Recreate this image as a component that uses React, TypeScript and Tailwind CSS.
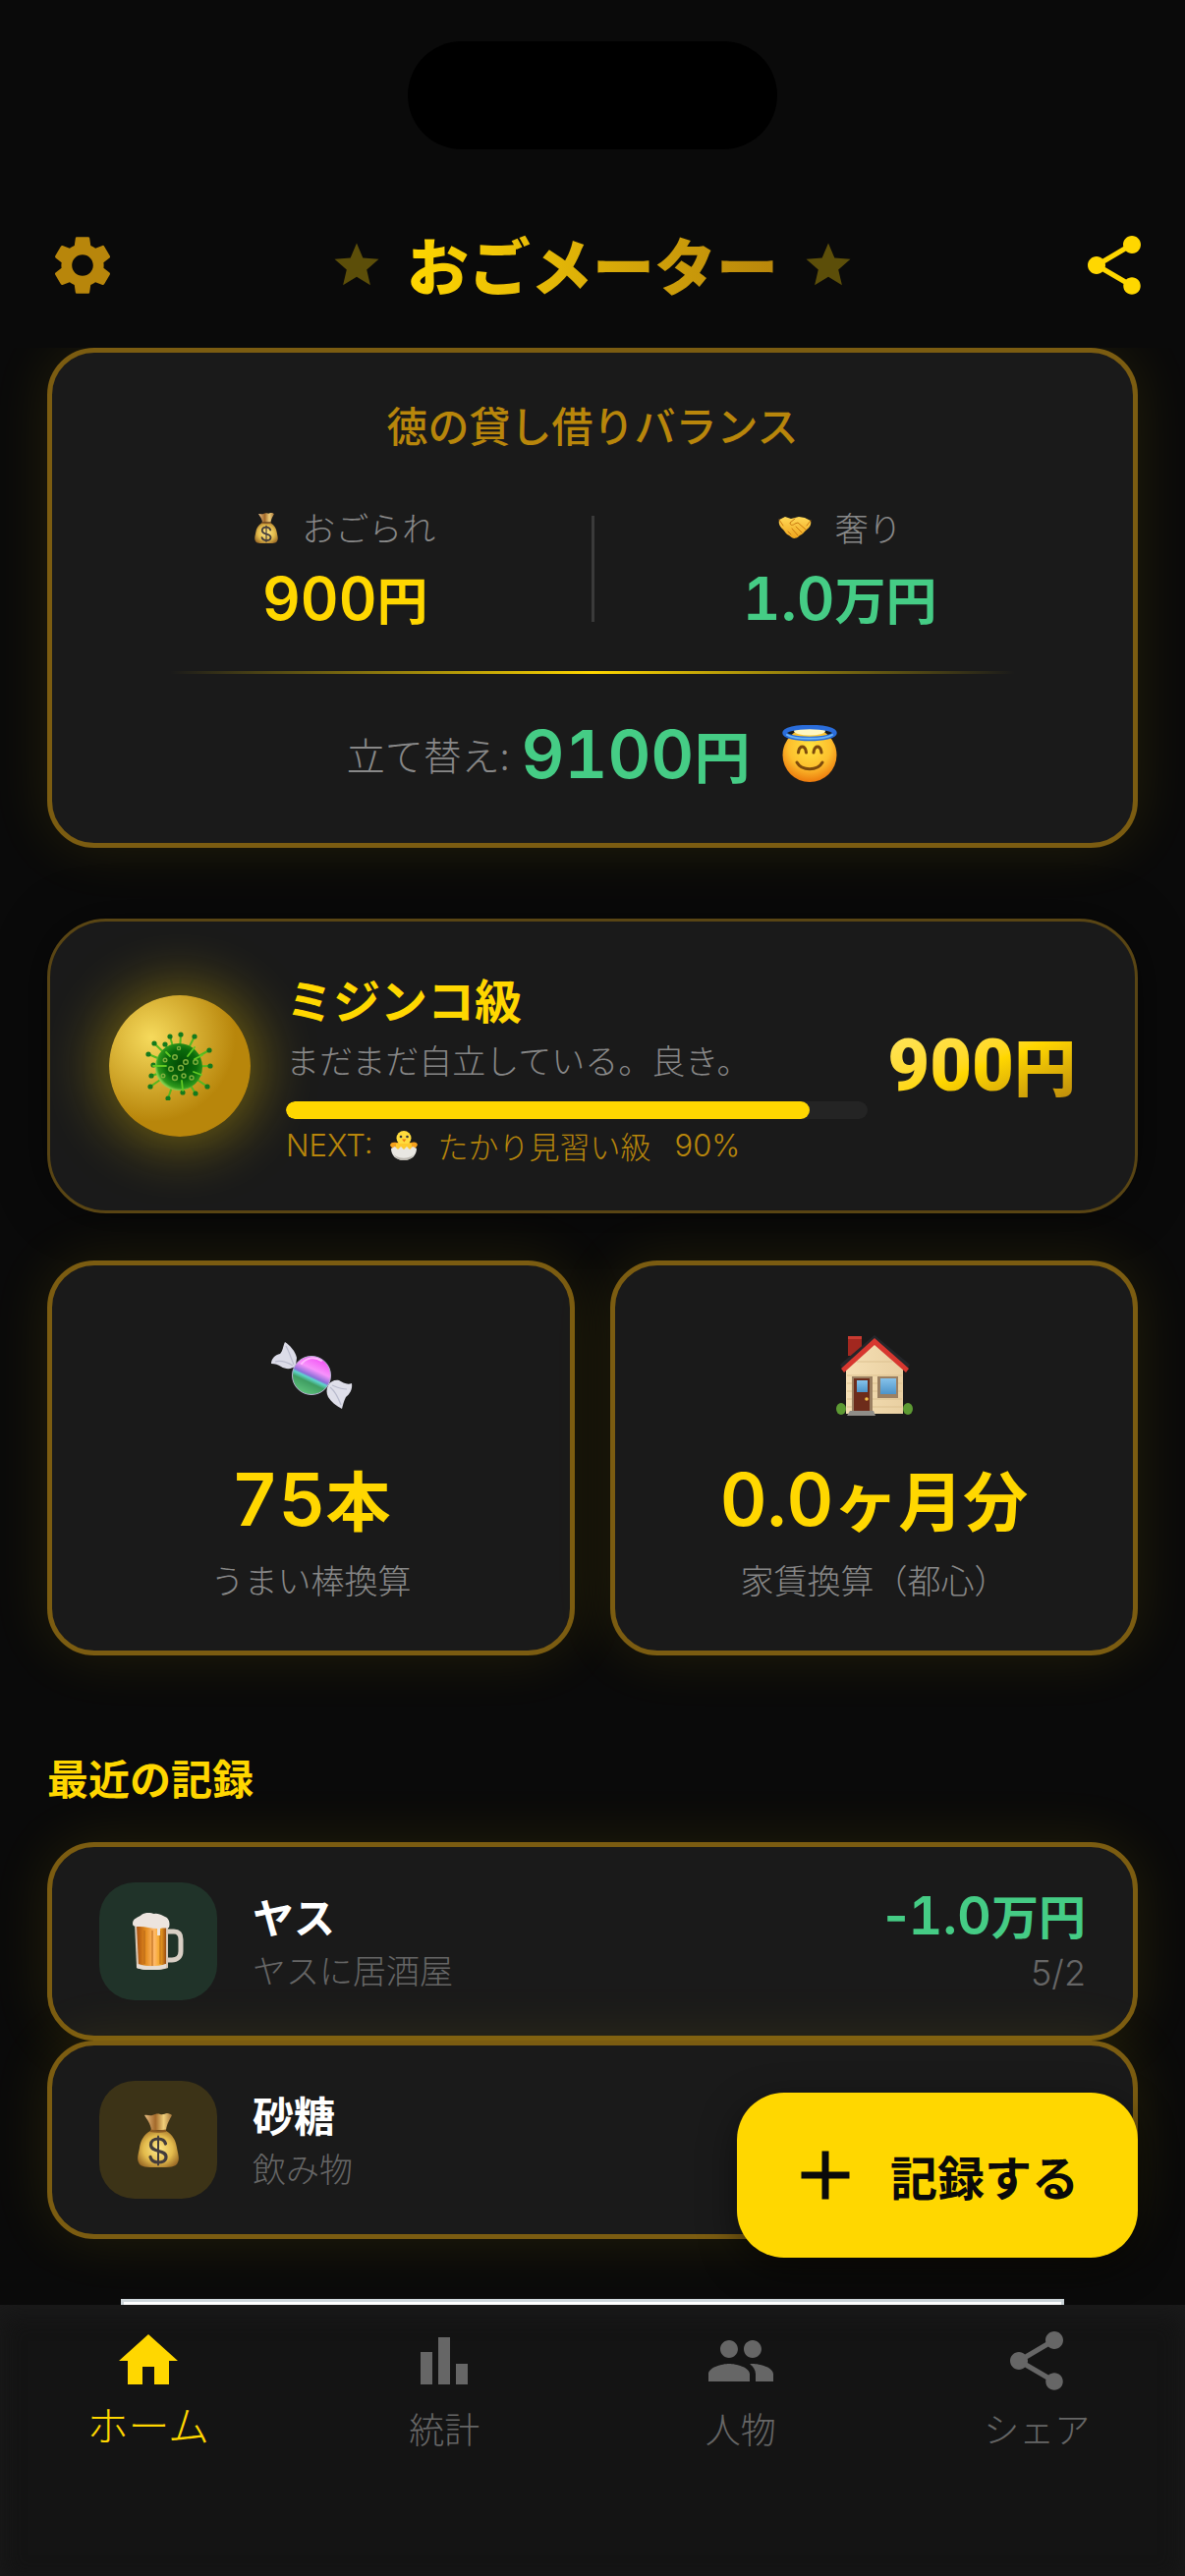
import type { ReactNode } from "react";
import {
  MdAdd,
  MdBarChart,
  MdHome,
  MdPeople,
  MdSettings,
  MdShare,
  MdStar,
} from "react-icons/md";

interface RecordItem {
  name: string;
  memo: string;
  icon: ReactNode;
  tile: string;
  color: string;
  sign?: string;
  value?: string;
  unit?: string;
  date?: string;
}

const cardClass =
  "border-5 border-[#7b5c11] rounded-[48px] bg-[#1a1a1a] shadow-[0_0_60px_rgba(255,215,0,0.1)]";

function MoneyBag({ className }: { className: string }) {
  return (
    <svg viewBox="0 0 42 55" className={className} aria-hidden="true">
      <defs>
        <radialGradient id="bagBody" cx="0.5" cy="0.5" r="0.6">
          <stop offset="0" stopColor="#ffe98a" />
          <stop offset="0.6" stopColor="#e3bb4c" />
          <stop offset="1" stopColor="#9a6a26" />
        </radialGradient>
        <linearGradient id="bagNeck" x1="0" x2="1">
          <stop offset="0" stopColor="#e6bd83" />
          <stop offset="0.4" stopColor="#a3692a" />
          <stop offset="0.7" stopColor="#f0cf7a" />
          <stop offset="1" stopColor="#a3743a" />
        </linearGradient>
      </defs>
      <path
        d="M7 2c3-1 5 1 8 0s5-2 8-1 5-1 7-1 4 1 5 2c-2 4-5 8-6 15H14C13 10 10 7 7 2z"
        fill="url(#bagNeck)"
      />
      <path
        d="M13 18h16c7 4 10 10 11 17 1 6 3 11 1 15-2 5-8 5-20 5S3 55 1 50c-2-4 0-9 1-15 1-7 4-13 11-17z"
        fill="url(#bagBody)"
      />
      <path d="M13 16.500c5 1 11 1 16 0v2.500c-5 1-11 1-16 0z" fill="#8a5a22" />
      <g fill="none" stroke="#433c3c" strokeWidth="3.200" strokeLinecap="round">
        <path d="M28.500 31c-1-4-4-5-7.500-5-4 0-7.500 2-7.500 6 0 8.500 15.500 4.500 15.500 12.500 0 4-4 5.500-8 5.500s-7-2-8-5.500" />
        <path d="M21 23.500v29" strokeWidth="2" />
      </g>
    </svg>
  );
}

function Handshake({ className }: { className: string }) {
  return (
    <svg viewBox="0 0 34 24" className={className} aria-hidden="true">
      <defs>
        <linearGradient id="hands" x1="0" y1="0" x2="0" y2="1">
          <stop offset="0" stopColor="#ffd957" />
          <stop offset="1" stopColor="#f0a51c" />
        </linearGradient>
      </defs>
      <path
        d="M1 4 7 1l6 2 4-1 4-1 6 1 6 3c1 4-1 7-4 9l-3 3c-2 3-4 2-5 4-2 2-3 1-4 2-3 0-4-2-6-3-3-1-4-4-6-6-3-3-5-5-4-10z"
        fill="url(#hands)"
      />
      <path
        d="M17 3l-5 4c0 3 3 3 5 1l3-1 8 7M18 11l6 6M14 13l6 7M10 16l3 3M1 4l4 6M33 5l-4 5"
        fill="none"
        stroke="#c9780f"
        strokeWidth="1"
        strokeLinecap="round"
      />
    </svg>
  );
}

function Angel({ className }: { className: string }) {
  return (
    <svg viewBox="0 0 58 58" className={className} aria-hidden="true">
      <defs>
        <radialGradient id="angelFace" cx="0.5" cy="0.35" r="0.65">
          <stop offset="0" stopColor="#ffe340" />
          <stop offset="0.6" stopColor="#fdbf2d" />
          <stop offset="1" stopColor="#ec7a0d" />
        </radialGradient>
      </defs>
      <circle cx="29" cy="30.500" r="27.500" fill="url(#angelFace)" />
      <ellipse cx="29" cy="6" rx="16" ry="4.500" fill="#fff7c2" />
      <ellipse
        cx="29"
        cy="8"
        rx="25.500"
        ry="6"
        fill="none"
        stroke="#2a6ddb"
        strokeWidth="4.500"
      />
      <path
        d="M6 10c8 5 38 5 46 0"
        fill="none"
        stroke="#69b5f7"
        strokeWidth="2"
        strokeLinecap="round"
      />
      <g fill="none" stroke="#7d4a0c" strokeWidth="3" strokeLinecap="round">
        <path d="M17.500 28c1-8 7-8 8 0M33 28c1-8 7-8 8 0" />
        <path d="M16 38c5 9 21 9 26 0" />
      </g>
    </svg>
  );
}

function Virus({ className }: { className: string }) {
  const spikes = [
    [36, 3],
    [50, 5],
    [65, 19],
    [66, 35],
    [63, 56],
    [51, 63],
    [38, 62],
    [23, 68],
    [5, 56],
    [6, 45],
    [8, 34],
    [3, 23],
    [9, 12],
    [20, 13],
    [25, 5],
  ];

  return (
    <svg viewBox="0 0 70 70" className={className} aria-hidden="true">
      <defs>
        <radialGradient id="virusBody" cx="0.55" cy="0.45" r="0.55">
          <stop offset="0" stopColor="#034a05" />
          <stop offset="0.6" stopColor="#0a6b0b" />
          <stop offset="0.9" stopColor="#2f9a1c" />
          <stop offset="1" stopColor="#86cf4d" />
        </radialGradient>
      </defs>
      {spikes.map(([x, y]) => (
        <g key={`${x}-${y}`}>
          <path d={`M34 36 ${x} ${y}`} stroke="#54b81f" strokeWidth="2" />
          <circle cx={x} cy={y} r="2.600" fill="#157a1c" />
        </g>
      ))}
      <circle cx="34" cy="36" r="24" fill="url(#virusBody)" />
      <g fill="none" stroke="#7fae3c" strokeWidth="1.400">
        <circle cx="30" cy="26" r="2.300" />
        <circle cx="41" cy="31" r="2.300" />
        <circle cx="36" cy="37" r="2.500" />
        <circle cx="26" cy="38" r="2.300" />
        <circle cx="30" cy="47" r="2.500" />
        <circle cx="39" cy="45" r="2" />
        <circle cx="47" cy="47" r="2" />
        <circle cx="34" cy="17" r="1.600" />
        <circle cx="20" cy="29" r="1.800" />
        <circle cx="51" cy="31" r="2.300" />
        <circle cx="18" cy="45" r="1.800" />
      </g>
      <path
        d="M50 16l-7 9M58 24l-8 4M8 35h13M38 60l-1-10M57 44l-8-3M21 21l4 4"
        fill="none"
        stroke="#63c923"
        strokeWidth="1.800"
        strokeLinecap="round"
      />
    </svg>
  );
}

function Chick({ className }: { className: string }) {
  return (
    <svg viewBox="0 0 30 30" className={className} aria-hidden="true">
      <path
        d="M8 12C4 11 1 12 1 15c2 3 4 3 6 4h16c3-1 5-2 6-5-1-3-4-3-7-2z"
        fill="#f6a21c"
      />
      <circle cx="15" cy="7.500" r="7.500" fill="#ffdc3d" />
      <path d="M7 13h16v8H7z" fill="#fdc92c" />
      <path
        d="M2 18l4-2 3 3 3-3 3 3 3-3 3 3 3-3 4 2c0 7-5 12-13 12S2 25 2 18z"
        fill="#e9e7e2"
      />
      <path d="M5 24c4 5 16 5 20 0-2 4-5 6-10 6s-8-2-10-6z" fill="#bdb9b2" />
      <circle cx="12" cy="6" r="1.300" fill="#33343a" />
      <circle cx="18.500" cy="6" r="1.300" fill="#33343a" />
      <path d="M13 8.500h4.500l-2.200 3z" fill="#e97812" />
    </svg>
  );
}

function Candy({ className }: { className: string }) {
  return (
    <svg viewBox="0 0 84 84" className={className} aria-hidden="true">
      <defs>
        <linearGradient id="candyBall" x1="0.7" y1="0.1" x2="0.3" y2="0.95">
          <stop offset="0" stopColor="#f45cf6" />
          <stop offset="0.3" stopColor="#f792fb" />
          <stop offset="0.5" stopColor="#8a6fd8" />
          <stop offset="0.56" stopColor="#5fd6cf" />
          <stop offset="0.68" stopColor="#3f9d62" />
          <stop offset="1" stopColor="#5cc07a" />
        </linearGradient>
      </defs>
      <path
        d="M15 8c5 3 11 10 12 16l-1 8c-4 4-10 4-15 1-3-2-6-3-10-3 0-5 4-9 9-10 3-3 3-8 5-12z"
        fill="#dcdce8"
      />
      <path d="M16 12c3 5 5 12 8 19M5 28c7-2 13 1 18 4" fill="none" stroke="#b9bbcd" strokeWidth="1.200" />
      <path
        d="M59 52c2-4 7-6 11-5 4 2 8 5 13 3 1 6-2 11-6 14-2 4-3 8-4 12-6-3-11-7-14-12-2-4-2-8 0-12z"
        fill="#dfdfea"
      />
      <path d="M61 54c5 4 8 10 11 18M63 52c5 2 9 4 15 4" fill="none" stroke="#b9bbcd" strokeWidth="1.200" />
      <circle cx="42" cy="42" r="19.500" fill="url(#candyBall)" stroke="#b9b3d4" strokeWidth="1" />
      <path d="M32 30c5-6 13-8 20-3" fill="none" stroke="#ffb8ff" strokeWidth="2" strokeLinecap="round" />
    </svg>
  );
}

function House({ className }: { className: string }) {
  return (
    <svg viewBox="0 0 84 84" className={className} aria-hidden="true">
      <defs>
        <linearGradient id="houseWall" x1="0" x2="1">
          <stop offset="0" stopColor="#f5dfb4" />
          <stop offset="1" stopColor="#e9d0a2" />
        </linearGradient>
        <linearGradient id="housePane" x1="0" y1="0" x2="0" y2="1">
          <stop offset="0" stopColor="#86c2ea" />
          <stop offset="1" stopColor="#4c93c9" />
        </linearGradient>
      </defs>
      <path d="M15 2h14v20H15z" fill="#a2271f" />
      <path d="M15 2h14v3H15z" fill="#c93b31" />
      <path d="M42 1 78 31l-3 5L42 9 10 36l-3-5z" fill="#25262a" />
      <path d="M13 34 42 9l29 25v47H13z" fill="url(#houseWall)" />
      <path
        d="M14 42h56M14 50h56M14 58h56M14 66h56M14 74h56M24 28h36"
        stroke="#dcc190"
        strokeWidth="1"
      />
      <path d="M8 35 42 4l35 31-3 4-32-28-31 28z" fill="#d7372f" />
      <path d="M19 43h21v36H19z" fill="#9b8062" />
      <path d="M21 45h16v33H21z" fill="#6d2c1b" />
      <path d="M24 47h11v12H24z" fill="url(#housePane)" />
      <circle cx="34" cy="66" r="1.800" fill="#f3c14a" />
      <path d="M45 43h21v22H45z" fill="#9b8062" />
      <path d="M48 45h16v16H48z" fill="url(#housePane)" />
      <path d="M17 78h24l2 5H14z" fill="#8f8d88" />
      <ellipse cx="8" cy="76" rx="5" ry="6" fill="#5d9a33" />
      <ellipse cx="76" cy="76" rx="5" ry="6" fill="#5d9a33" />
    </svg>
  );
}

function Beer({ className }: { className: string }) {
  return (
    <svg viewBox="0 0 52 58" className={className} aria-hidden="true">
      <defs>
        <linearGradient id="beerBody" x1="0" x2="1">
          <stop offset="0" stopColor="#a8500f" />
          <stop offset="0.3" stopColor="#e28a1c" />
          <stop offset="0.6" stopColor="#ffb96a" />
          <stop offset="0.8" stopColor="#f2a521" />
          <stop offset="1" stopColor="#9c4d12" />
        </linearGradient>
      </defs>
      <path
        d="M34 19h8c5 0 7 3 7 8v12c0 6-4 9-9 9h-6"
        fill="none"
        stroke="#d9cfc5"
        strokeWidth="5"
      />
      <path d="M2 10h34v46c-8 3-24 3-32 0z" fill="#d8c8b6" />
      <path d="M4 12h30v40c-8 3-20 3-28 0z" fill="url(#beerBody)" />
      <path d="M12 18v34M20 18v36M28 18v34" stroke="#b4661a" strokeWidth="1" />
      <path
        d="M0 11C0 5 6 5 9 2c4-3 10-2 13-1 5-1 8 2 11 3 5 2 5 8 4 11-3 1-6 0-9 1v7h-3v-7c-6 0-12-2-18-2-4 0-7 0-7-3z"
        fill="#ece4de"
      />
      <path d="M4 52c8 3 22 3 30 0v4c-8 3-22 3-30 0z" fill="#e5dcd2" />
    </svg>
  );
}

function Amount({
  sign,
  value,
  unit,
  valueClass,
  unitClass,
}: {
  sign?: string;
  value: string;
  unit?: string;
  valueClass: string;
  unitClass: string;
}) {
  return (
    <p className="flex items-baseline leading-none whitespace-nowrap">
      <span className={`font-['Inter',sans-serif] font-semibold ${valueClass}`}>
        {sign}
        <span className="tabular-nums">{value}</span>
      </span>
      <span className={`font-bold ${unitClass}`}>{unit}</span>
    </p>
  );
}

function BalanceColumn({
  icon,
  label,
  color,
  value,
  unit,
}: {
  icon: ReactNode;
  label: string;
  color: string;
  value: string;
  unit: string;
}) {
  return (
    <div className="flex flex-1 flex-col items-center gap-3">
      <div className="flex items-center gap-6 text-[34px] leading-[48px] font-light text-[#888888]">
        {icon}
        {label}
      </div>
      <div className={`flex h-[72px] items-center ${color}`}>
        <Amount
          value={value}
          unit={unit}
          valueClass="text-[60px]"
          unitClass="text-[52px]"
        />
      </div>
    </div>
  );
}

function StatCard({
  icon,
  value,
  unit,
  label,
}: {
  icon: ReactNode;
  value: string;
  unit: string;
  label: string;
}) {
  return (
    <div className={`flex flex-1 flex-col items-center pt-[70px] pb-12 ${cardClass}`}>
      {icon}
      <div className="mt-9 flex h-24 items-center text-[#ffd700]">
        <Amount
          value={value}
          unit={unit}
          valueClass="text-[74px]"
          unitClass="text-[66px]"
        />
      </div>
      <p className="mt-2.5 text-[34px] leading-[48px] font-light text-[#888888]">
        {label}
      </p>
    </div>
  );
}

const records: RecordItem[] = [
  {
    name: "ヤス",
    memo: "ヤスに居酒屋",
    icon: <Beer className="h-[58px] w-[52px]" />,
    tile: "bg-[#203329]",
    color: "text-[#45cc85]",
    sign: "-",
    value: "1.0",
    unit: "万円",
    date: "5/2",
  },
  {
    name: "砂糖",
    memo: "飲み物",
    icon: <MoneyBag className="h-[55px] w-[42px]" />,
    tile: "bg-[#3c3317]",
    color: "text-[#ffd700]",
  },
];

const tabs = [
  { label: "ホーム", Icon: MdHome, active: true },
  { label: "統計", Icon: MdBarChart, active: false },
  { label: "人物", Icon: MdPeople, active: false },
  { label: "シェア", Icon: MdShare, active: false },
];

export default function App() {
  const progress = 90;

  return (
    <div className="flex min-h-screen flex-col bg-[#0a0a0a] font-['Noto_Sans_CJK_JP',sans-serif]">
      <header className="relative z-10 bg-[#0a0a0a]">
        <div className="flex h-[186px] justify-center pt-[42px]">
          <div className="h-[110px] w-[376px] rounded-full bg-black" />
        </div>
        <div className="grid h-[168px] grid-cols-[1fr_auto_1fr] items-center px-9">
          <button
            type="button"
            aria-label="設定"
            className="justify-self-start pl-3 text-[#b8860b]"
          >
            <MdSettings className="size-[72px]" />
          </button>
          <div className="flex items-center gap-6">
            <MdStar className="size-[54px] text-[#5c4e09]" />
            <h1 className="bg-gradient-to-r from-[#ffd700] to-[#b8860b] bg-clip-text pb-1 text-[63px] leading-[90px] font-black text-transparent">
              おごメーター
            </h1>
            <MdStar className="size-[54px] text-[#5c4e09]" />
          </div>
          <button
            type="button"
            aria-label="共有"
            className="justify-self-end text-[#ffd700]"
          >
            <MdShare className="size-[72px]" />
          </button>
        </div>
      </header>

      <main className="relative flex flex-1 flex-col px-12">
        <section className={`flex flex-col px-12 pt-[46px] pb-12 ${cardClass}`}>
          <h2 className="text-center text-[42px] leading-[54px] font-medium text-[#b8860b]">
            徳の貸し借りバランス
          </h2>
          <div className="mt-[54px] flex items-center">
            <BalanceColumn
              icon={<MoneyBag className="h-[31px] w-6" />}
              label="おごられ"
              color="text-[#ffd700]"
              value="900"
              unit="円"
            />
            <div className="h-[108px] w-[3px] bg-[#3a3a3a]" />
            <BalanceColumn
              icon={<Handshake className="h-6 w-[34px]" />}
              label="奢り"
              color="text-[#45cc85]"
              value="1.0"
              unit="万円"
            />
          </div>
          <div className="mx-[72px] mt-[38px] h-[3px] bg-gradient-to-r from-[#ffd70000] via-[#ffd700] to-[#ffd70000]" />
          <div className="mt-[38px] flex h-[86px] items-center justify-center">
            <span className="text-[39px] leading-[54px] font-light text-[#888888]">
              立て替え:
            </span>
            <div className="ml-3 text-[#45cc85]">
              <Amount
                value="9100"
                unit="円"
                valueClass="text-[68px]"
                unitClass="text-[57px]"
              />
            </div>
            <Angel className="ml-8 size-[58px]" />
          </div>
        </section>

        <section className="mt-[72px] flex items-center rounded-[60px] border-3 border-[#594514] bg-[#1a1a1a] px-[60px] py-[45px] shadow-[0_0_48px_rgba(0,0,0,0.5)]">
          <div className="flex size-36 shrink-0 items-center justify-center rounded-full bg-[radial-gradient(circle_at_30%_30%,#f6da5c,#b8860b_60%)] shadow-[0_0_60px_8px_rgba(255,215,0,0.4)]">
            <Virus className="size-[70px]" />
          </div>
          <div className="ml-9 flex-1">
            <h2 className="text-[48px] leading-[66px] font-bold text-[#ffd700]">
              ミジンコ級
            </h2>
            <p className="mt-1.5 text-[34px] leading-[48px] font-light text-[#888888]">
              まだまだ自立している。良き。
            </p>
            <div className="mt-4.5 h-[18px] overflow-hidden rounded-full bg-[#242424]">
              <div
                className="h-full rounded-full bg-[#ffd700]"
                style={{ width: `${progress}%` }}
              />
            </div>
            <div className="mt-1.5 flex items-center text-[31px] leading-[42px] font-light text-[#b8860b]">
              <span className="font-['Inter',sans-serif]">NEXT:</span>
              <Chick className="mr-5 ml-4 size-[30px]" />
              <span>たかり見習い級</span>
              <span className="ml-6 font-['Inter',sans-serif]">{progress}%</span>
            </div>
          </div>
          <p className="ml-5 flex items-baseline bg-gradient-to-br from-[#ffe55c] via-[#ffd700] to-[#b8860b] bg-clip-text leading-none font-black whitespace-nowrap text-transparent">
            <span className="font-['Roboto',sans-serif] text-[74px]">900</span>
            <span className="text-[63px]">円</span>
          </p>
        </section>

        <div className="mt-12 flex gap-9">
          <StatCard
            icon={<Candy className="size-[84px]" />}
            value="75"
            unit="本"
            label="うまい棒換算"
          />
          <StatCard
            icon={<House className="size-[84px]" />}
            value="0.0"
            unit="ヶ月分"
            label="家賃換算（都心）"
          />
        </div>

        <h2 className="mt-[94px] text-[42px] leading-[60px] font-bold text-[#ffd700]">
          最近の記録
        </h2>

        <ul className="mt-9">
          {records.map((item) => (
            <li
              key={item.name}
              className={`flex items-center px-12 py-9 ${cardClass}`}
            >
              <div
                className={`flex size-30 items-center justify-center rounded-[36px] ${item.tile}`}
              >
                {item.icon}
              </div>
              <div className="ml-9 flex-1">
                <p className="text-[42px] leading-[54px] font-bold text-white">
                  {item.name}
                </p>
                <p className="mt-1 text-[34px] leading-[48px] font-light text-[#666666]">
                  {item.memo}
                </p>
              </div>
              {item.value && (
                <div className="flex flex-col items-end gap-1">
                  <div className={`flex h-[60px] items-center ${item.color}`}>
                    <Amount
                      sign={item.sign}
                      value={item.value}
                      unit={item.unit}
                      valueClass="text-[54px]"
                      unitClass="text-[48px]"
                    />
                  </div>
                  <p className="font-['Inter',sans-serif] text-[36px] leading-[48px] font-light text-[#666666]">
                    {item.date}
                  </p>
                </div>
              )}
            </li>
          ))}
        </ul>

        {/* ad banner, only its top edge shows above the tab bar */}
        <div className="mx-auto mt-auto h-1.5 w-[960px] max-w-full border-3 border-b-0 border-[#cfd8dc] bg-white" />

        <button
          type="button"
          className="absolute right-12 bottom-12 flex h-[168px] items-center gap-6 rounded-[48px] bg-[#ffd700] pr-[60px] pl-12 text-[48px] font-bold text-[#0a0a0a] shadow-[0_12px_36px_rgba(0,0,0,0.5)]"
        >
          <MdAdd className="size-[84px]" />
          記録する
        </button>
      </main>

      <nav className="relative flex h-[276px] bg-[#141414] pt-[21px] shadow-[inset_0_8px_24px_#1b1b1b]">
        {tabs.map(({ label, Icon, active }) => (
          <a
            key={label}
            href="#"
            className={`flex flex-1 flex-col items-center font-light ${
              active
                ? "text-[42px] leading-[56px] text-[#ffd700]"
                : "text-[36px] leading-[64px] text-[#666666]"
            }`}
          >
            <Icon className="size-[72px]" />
            {label}
          </a>
        ))}
      </nav>
    </div>
  );
}
